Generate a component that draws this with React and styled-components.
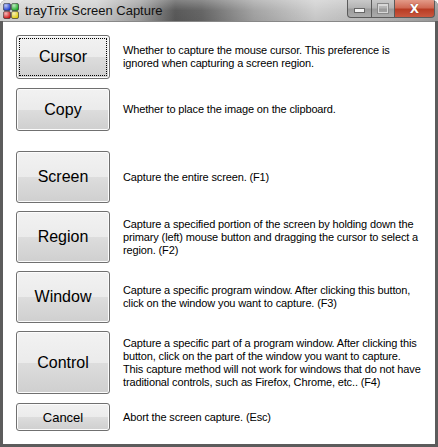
import React from 'react';
import styled, { createGlobalStyle } from 'styled-components';

const GlobalStyle = createGlobalStyle`
  html, body {
    margin: 0;
    padding: 0;
    background: #ffffff;
  }
  body {
    font-family: 'Liberation Sans', Arial, sans-serif;
  }
`;

const Frame = styled.div`
  width: 438px;
  height: 447px;
  box-sizing: border-box;
  display: flex;
  flex-direction: column;
  background: #5c5c5c;
  border-radius: 6px 6px 0 0;
  overflow: hidden;
`;

const TitleBar = styled.div`
  height: 21px;
  flex: none;
  display: flex;
  align-items: center;
  position: relative;
  background:
    linear-gradient(to bottom, rgba(255, 255, 255, 0.25), rgba(255, 255, 255, 0) 50%, rgba(0, 0, 0, 0.05)),
    linear-gradient(to right, #d6d6d6 0%, #d0d0d0 22%, #a0a0a0 32%, #5a5a5a 40%, #666666 46%, #a4a4a4 58%, #cfcfcf 72%, #bcbcbc 86%, #9c9c9c 100%);
`;

const AppIcon = styled.svg`
  margin-left: 3px;
  flex: none;
`;

const Caption = styled.span`
  margin-left: 6px;
  font-size: 13px;
  color: #111;
`;

const CaptionButtons = styled.div`
  position: absolute;
  top: 0;
  right: 3px;
  display: flex;
  height: 18px;
`;

const CapButton = styled.div`
  width: ${p => p.$w}px;
  height: 18px;
  box-sizing: border-box;
  display: flex;
  align-items: center;
  justify-content: center;
  border: 1px solid #5a5a5a;
  border-top: none;
  border-left: ${p => (p.$first ? '1px solid #5a5a5a' : 'none')};
  border-radius: ${p => (p.$first ? '0 0 0 4px' : p.$last ? '0 0 4px 0' : '0')};
  background: ${p =>
    p.$close
      ? 'linear-gradient(to bottom, #e39a88 0%, #d06a55 45%, #b83c24 55%, #c9583f 100%)'
      : 'linear-gradient(to bottom, #c9c9c9 0%, #b4b4b4 45%, #9b9b9b 55%, #acacac 100%)'};
`;

const MinGlyph = styled.div`
  width: 9px;
  height: 3px;
  margin-top: 4px;
  background: #f2f2f2;
  border: 1px solid #666;
`;

const MaxGlyph = styled.div`
  width: 8px;
  height: 6px;
  border: 1px solid #d8d8d8;
  border-top-width: 2px;
  outline: 1px solid #8a8a8a;
`;

const CloseGlyph = styled.span`
  font-family: 'DejaVu Sans', sans-serif;
  font-weight: bold;
  font-size: 12px;
  color: #ffffff;
  text-shadow: 0 0 1px #6a1a0a;
  line-height: 1;
`;

const Client = styled.div`
  flex: 1;
  margin: 0 3px 3px 3px;
  background: #ffffff;
  border-top: 1px solid #888;
  padding: 13px 0 0 13px;
  display: flex;
  flex-direction: column;
`;

const Row = styled.div`
  display: flex;
  align-items: center;
  gap: 13px;
  margin-top: ${p => p.$gap}px;
`;

const Button = styled.div`
  position: relative;
  width: 94px;
  height: ${p => p.$h}px;
  flex: none;
  box-sizing: border-box;
  border: 1px solid #707070;
  border-radius: 3px;
  display: flex;
  align-items: center;
  justify-content: center;
  font-size: ${p => (p.$small ? 13 : 16)}px;
  color: #000;
  box-shadow: inset 0 0 0 1px #fcfcfc;
  background: linear-gradient(to bottom, #f2f2f2 0%, #ebebeb 50%, #dddddd 50%, #cfcfcf 100%);

  &::after {
    content: '';
    display: ${p => (p.$focused ? 'block' : 'none')};
    position: absolute;
    inset: 2px;
    border: 1px dotted #000;
    border-radius: 1px;
  }
`;

const Desc = styled.div`
  font-size: 11px;
  line-height: 13px;
  letter-spacing: -0.14px;
  color: #000;
  white-space: nowrap;
`;

const rows = [
  {
    label: 'Cursor',
    h: 44,
    gap: 0,
    focused: true,
    lines: ['Whether to capture the mouse cursor. This preference is', 'ignored when capturing a screen region.'],
  },
  { label: 'Copy', h: 43, gap: 9, lines: ['Whether to place the image on the clipboard.'] },
  { label: 'Screen', h: 52, gap: 20, lines: ['Capture the entire screen. (F1)'] },
  {
    label: 'Region',
    h: 52,
    gap: 8,
    lines: [
      'Capture a specified portion of the screen by holding down the',
      'primary (left) mouse button and dragging the cursor to select a',
      'region. (F2)',
    ],
  },
  {
    label: 'Window',
    h: 52,
    gap: 8,
    lines: ['Capture a specific program window. After clicking this button,', 'click on the window you want to capture. (F3)'],
  },
  {
    label: 'Control',
    h: 63,
    gap: 8,
    lines: [
      'Capture a specific part of a program window. After clicking this',
      'button, click on the part of the window you want to capture.',
      'This capture method will not work for windows that do not have',
      'traditional controls, such as Firefox, Chrome, etc.. (F4)',
    ],
  },
  { label: 'Cancel', h: 28, gap: 9, small: true, lines: ['Abort the screen capture. (Esc)'] },
];

const Icon = () => (
  <AppIcon width="16" height="16" viewBox="0 0 16 16">
    <defs>
      <radialGradient id="gl" cx="35%" cy="30%" r="70%">
        <stop offset="0" stopColor="#fff" stopOpacity="0.7" />
        <stop offset="1" stopColor="#fff" stopOpacity="0" />
      </radialGradient>
    </defs>
    <rect x="0.5" y="0.5" width="7" height="7" rx="1.5" fill="#1f3fd0" stroke="#222" strokeWidth="0.6" />
    <rect x="8.5" y="0.5" width="7" height="7" rx="1.5" fill="#1fae2a" stroke="#222" strokeWidth="0.6" />
    <rect x="0.5" y="8.5" width="7" height="7" rx="1.5" fill="#d01818" stroke="#222" strokeWidth="0.6" />
    <rect x="8.5" y="8.5" width="7" height="7" rx="1.5" fill="#e0cc10" stroke="#222" strokeWidth="0.6" />
    <rect x="0.5" y="0.5" width="7" height="7" rx="1.5" fill="url(#gl)" />
    <rect x="8.5" y="0.5" width="7" height="7" rx="1.5" fill="url(#gl)" />
    <rect x="0.5" y="8.5" width="7" height="7" rx="1.5" fill="url(#gl)" />
    <rect x="8.5" y="8.5" width="7" height="7" rx="1.5" fill="url(#gl)" />
  </AppIcon>
);

const App = () => {
  return (
    <>
      <GlobalStyle />
      <Frame>
        <TitleBar>
          <Icon />
          <Caption>trayTrix Screen Capture</Caption>
          <CaptionButtons>
            <CapButton $w={25} $first>
              <MinGlyph />
            </CapButton>
            <CapButton $w={23}>
              <MaxGlyph />
            </CapButton>
            <CapButton $w={40} $close $last>
              <CloseGlyph>X</CloseGlyph>
            </CapButton>
          </CaptionButtons>
        </TitleBar>
        <Client>
          {rows.map(r => (
            <Row key={r.label} $gap={r.gap}>
              <Button $h={r.h} $focused={r.focused} $small={r.small}>
                {r.label}
              </Button>
              <Desc>
                {r.lines.map((l, i) => (
                  <div key={i}>{l}</div>
                ))}
              </Desc>
            </Row>
          ))}
        </Client>
      </Frame>
    </>
  );
};

export default App;
